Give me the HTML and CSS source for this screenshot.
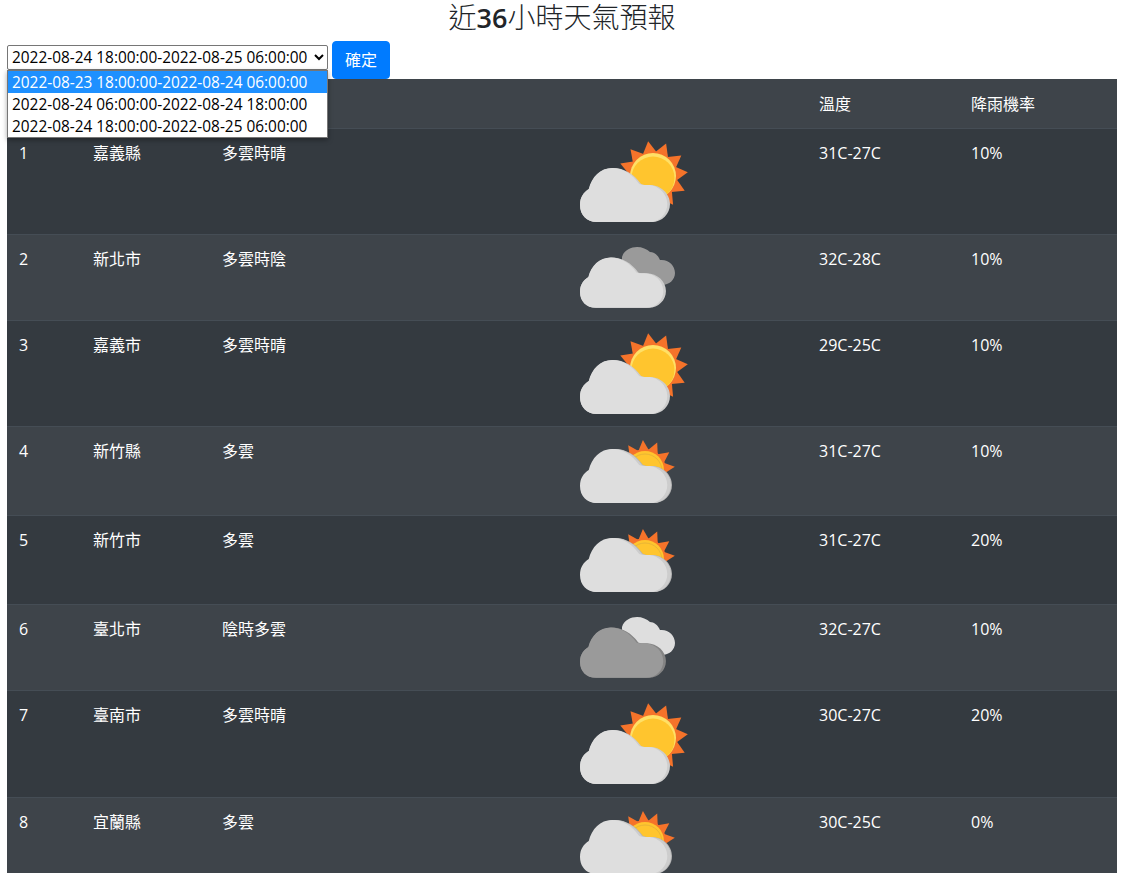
FILE: index.html
```html
<!DOCTYPE html>
<html lang="zh-Hant">
<head>
    <meta charset="UTF-8">
    <meta name="viewport" content="width=device-width, initial-scale=1.0">
    <title>近36小時天氣預報</title>
    <link rel="stylesheet" href="styles.css">
</head>
<body>
    <svg class="icon-defs" width="0" height="0">
        <defs>
            <path id="cloud" d="M17 54C7 54 0 47 0 37C0 29 4 24 9 21C12 9 21 0 33 0C44 0 54 6 61 16C63 17 66 17 70 17C81 17 90 26 90 36C90 46 82 54 72 54Z"/>
            <path id="cloud-back" d="M0 10C2 3 9 0 15 0C20 0 25 2 28 5C32 5 36 8 38 13C46 12 53 18 53 26C53 33 47 38 40 38L0 38Z"/>
            <g id="rays-big">
                <polygon points="73,-1 65,13 81,13" transform="rotate(-8 73 34)"/>
                <polygon points="73,-1 65,13 81,13" transform="rotate(22 73 34)"/>
                <polygon points="73,-1 65,13 81,13" transform="rotate(54 73 34)"/>
                <polygon points="73,-1 65,13 81,13" transform="rotate(84 73 34)"/>
                <polygon points="73,-1 65,13 81,13" transform="rotate(115 73 34)"/>
                <polygon points="73,-1 65,13 81,13" transform="rotate(145 73 34)"/>
                <polygon points="73,-1 65,13 81,13" transform="rotate(-40 73 34)"/>
                <polygon points="73,-1 65,13 81,13" transform="rotate(-69 73 34)"/>
            </g>
            <g id="rays-small">
                <polygon points="65,0 59,12 71,12" transform="rotate(-4 65 30)"/>
                <polygon points="65,0 59,12 71,12" transform="rotate(24 65 30)"/>
                <polygon points="65,0 59,12 71,12" transform="rotate(54 65 30)"/>
                <polygon points="65,0 59,12 71,12" transform="rotate(84 65 30)"/>
                <polygon points="65,0 59,12 71,12" transform="rotate(-34 65 30)"/>
            </g>
            <symbol id="icon-sunny" viewBox="0 -1 110 81">
                <g class="ray"><use href="#rays-big"/><circle cx="73" cy="34" r="24"/></g>
                <circle class="sun-edge" cx="73" cy="34" r="23"/>
                <circle class="sun" cx="73" cy="36" r="21.5"/>
                <use class="shade" href="#cloud" y="26"/>
                <use class="light" href="#cloud" transform="translate(0 26) scale(.97 1)"/>
            </symbol>
            <symbol id="icon-cloudy" viewBox="0 -1 96 64">
                <g class="ray"><use href="#rays-small"/><circle cx="65" cy="30" r="21"/></g>
                <circle class="sun" cx="65" cy="30" r="19"/>
                <circle class="sun-line" cx="65" cy="31" r="17"/>
                <use class="shade-dark" href="#cloud" x="2" y="9"/>
                <use class="shade" href="#cloud" x="1" y="9"/>
                <use class="light" href="#cloud" transform="translate(0 9) scale(.97 1)"/>
            </symbol>
            <symbol id="icon-overcast" viewBox="0 0 96 61">
                <use class="dark" href="#cloud-back" x="42"/>
                <use class="shade" href="#cloud" transform="translate(0 10.5) scale(.955 .93)"/>
                <use class="light" href="#cloud" transform="translate(0 10.5) scale(.925 .93)"/>
            </symbol>
            <symbol id="icon-gloomy" viewBox="0 0 96 61">
                <use class="light" href="#cloud-back" x="42"/>
                <use class="darker" href="#cloud" transform="translate(0 10.5) scale(.955 .93)"/>
                <use class="dark" href="#cloud" transform="translate(0 10.5) scale(.925 .93)"/>
            </symbol>
        </defs>
    </svg>

    <h2 class="title">近<span class="title-num">36</span>小時天氣預報</h2>

    <form class="picker">
        <select class="picker-select">
            <option>2022-08-23 18:00:00-2022-08-24 06:00:00</option>
            <option>2022-08-24 06:00:00-2022-08-24 18:00:00</option>
            <option selected>2022-08-24 18:00:00-2022-08-25 06:00:00</option>
        </select>
        <button class="picker-btn" type="button">確定</button>
        <ul class="picker-list">
            <li class="picker-item active">2022-08-23 18:00:00-2022-08-24 06:00:00</li>
            <li class="picker-item">2022-08-24 06:00:00-2022-08-24 18:00:00</li>
            <li class="picker-item">2022-08-24 18:00:00-2022-08-25 06:00:00</li>
        </ul>
    </form>

    <table class="weather">
        <thead>
            <tr>
                <th class="col-no"></th>
                <th class="col-city"></th>
                <th class="col-desc"></th>
                <th class="col-icon"></th>
                <th class="col-temp">溫度</th>
                <th class="col-rain">降雨機率</th>
            </tr>
        </thead>
        <tbody>
            <tr>
                <td>1</td><td>嘉義縣</td><td>多雲時晴</td>
                <td><svg class="icon icon-sunny"><use href="#icon-sunny"/></svg></td>
                <td>31C-27C</td><td>10%</td>
            </tr>
            <tr>
                <td>2</td><td>新北市</td><td>多雲時陰</td>
                <td><svg class="icon icon-overcast"><use href="#icon-overcast"/></svg></td>
                <td>32C-28C</td><td>10%</td>
            </tr>
            <tr>
                <td>3</td><td>嘉義市</td><td>多雲時晴</td>
                <td><svg class="icon icon-sunny"><use href="#icon-sunny"/></svg></td>
                <td>29C-25C</td><td>10%</td>
            </tr>
            <tr>
                <td>4</td><td>新竹縣</td><td>多雲</td>
                <td><svg class="icon icon-cloudy"><use href="#icon-cloudy"/></svg></td>
                <td>31C-27C</td><td>10%</td>
            </tr>
            <tr>
                <td>5</td><td>新竹市</td><td>多雲</td>
                <td><svg class="icon icon-cloudy"><use href="#icon-cloudy"/></svg></td>
                <td>31C-27C</td><td>20%</td>
            </tr>
            <tr>
                <td>6</td><td>臺北市</td><td>陰時多雲</td>
                <td><svg class="icon icon-overcast"><use href="#icon-gloomy"/></svg></td>
                <td>32C-27C</td><td>10%</td>
            </tr>
            <tr class="row-tall">
                <td>7</td><td>臺南市</td><td>多雲時晴</td>
                <td><svg class="icon icon-sunny"><use href="#icon-sunny"/></svg></td>
                <td>30C-27C</td><td>20%</td>
            </tr>
            <tr>
                <td>8</td><td>宜蘭縣</td><td>多雲</td>
                <td><svg class="icon icon-cloudy"><use href="#icon-cloudy"/></svg></td>
                <td>30C-25C</td><td>0%</td>
            </tr>
        </tbody>
    </table>
</body>
</html>
```

FILE: styles.css
```css
* { margin: 0; padding: 0; box-sizing: border-box; }
html, body { height: 100%; overflow: hidden; }
body {
    padding: 0 7px;
    font-family: "Open Sans", "Noto Sans CJK TC", sans-serif;
    font-size: 16px;
    line-height: 1.5;
    color: #212529;
    background: #fff;
}
.icon-defs { position: absolute; }

.title {
    height: 41px;
    font-size: 28px;
    font-weight: 300;
    line-height: 34px;
    text-align: center;
}
.title-num { font-size: 27px; font-weight: 600; }

.picker { position: relative; display: flex; align-items: flex-start; gap: 4px; }
.picker-select {
    width: 321px;
    height: 25px;
    margin-top: 4px;
    font-family: "Open Sans", sans-serif;
    font-size: 15.4px;
    color: #000;
    background: #fff;
    border: 1px solid #767676;
    border-radius: 2px;
}
.picker-btn {
    height: 38px;
    padding: 0 12px 2px;
    font-family: "Noto Sans CJK TC", sans-serif;
    font-size: 16px;
    color: #fff;
    background: #007bff;
    border: 1px solid #007bff;
    border-radius: 4px;
}
.picker-list {
    position: absolute;
    top: 29px;
    left: 0;
    z-index: 10;
    width: 321px;
    list-style: none;
    background: #fff;
    border: 1px solid #767676;
    box-shadow: 0 2px 5px rgba(0, 0, 0, .35);
}
.picker-item {
    height: 22px;
    padding: 1px 0 0 4px;
    font-size: 15.4px;
    line-height: 22px;
    color: #000;
}
.picker-item.active { color: #fff; background: #1e90ff; }

.weather {
    width: 100%;
    table-layout: fixed;
    border-collapse: separate;
    border-spacing: 0;
    color: #fff;
    background: #343a40;
}
.weather th, .weather td {
    padding: 12px;
    text-align: left;
    vertical-align: top;
    border-top: 1px solid #454d55;
}
.weather th { height: 49px; font-weight: 400; border-top: 0; padding-top: 13px; }
.weather tbody tr:nth-child(even) { background: #3e444a; }
.weather thead { background: #3e444a; }
.weather .row-tall td { padding-bottom: 13px; }

.col-no { width: 74px; }
.col-city { width: 129px; }
.col-desc { width: 358px; }
.col-icon { width: 239px; }
.col-temp { width: 152px; }
.col-rain { width: 158px; }

.icon { display: block; }
.icon-sunny { width: 110px; height: 81px; }
.icon-cloudy { width: 96px; height: 64px; }
.icon-overcast { width: 96px; height: 61px; }

.ray { fill: #f5732a; }
.sun { fill: #ffc52e; }
.sun-edge { fill: #ffe066; }
.sun-line { fill: none; stroke: #d9a93a; stroke-width: .6; }
.light { fill: #dedede; }
.shade { fill: #cdcdcd; }
.shade-dark { fill: #b4b4b4; }
.dark { fill: #9a9a9a; }
.darker { fill: #848484; }
```
